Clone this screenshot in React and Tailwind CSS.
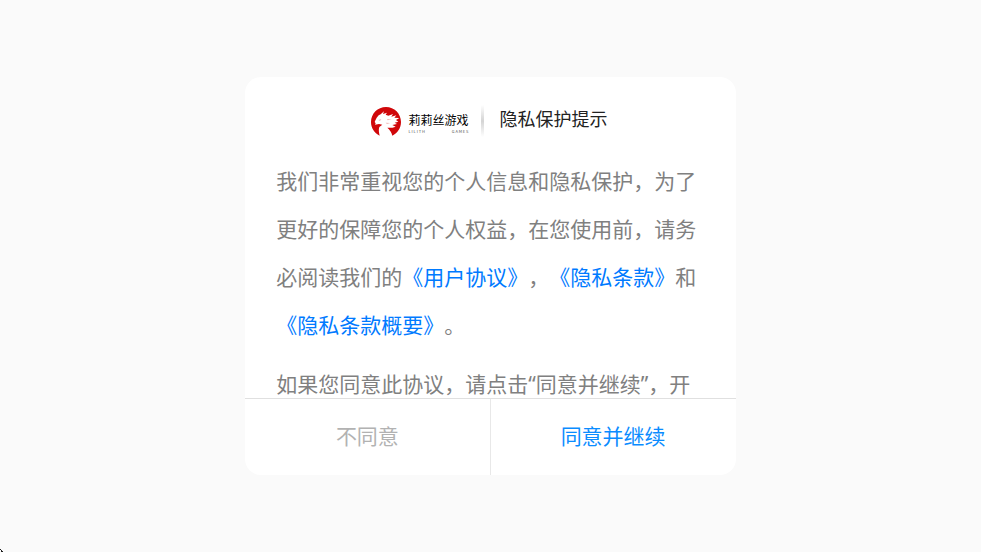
function LilithLogo() {
  return (
    <div className="flex items-center gap-[7px]">
      <svg className="h-[30px] w-[30px]" viewBox="0 0 90 90" aria-hidden="true">
        <path
          fill="#d0070a"
          d="M26 86C10 78 0 63 0 45C0 20 20 0 45 0S90 20 90 45C90 63 80 78 64 86C62 77 57 69 49 62Q60 64 74 59L64 54L78 51L71 47L82 44L75 39L85 33L70 32L76 25L61 29L66 21L52 26L44 23L48 17L36 21L39 13L29 22L23 25L17 32L14 38L11 45L14 49L12 53L24 51L34 53L25 60C22 68 24 77 26 86Z"
        />
        <path fill="#d0070a" opacity="0.3" d="M22 39L31 36L27 42ZM48 36L62 37L50 40ZM44 47L58 48L48 51Z" />
      </svg>
      <div className="flex flex-col font-['Noto_Sans_CJK_SC',sans-serif] text-black">
        <span className="text-[12px] leading-[18px]">莉莉丝游戏</span>
        <span className="flex justify-between text-[4px] leading-[4px] text-neutral-600">
          <span>L I L I T H</span>
          <span>G A M E S</span>
        </span>
      </div>
    </div>
  );
}

function PolicyLink({ children }) {
  return (
    <a href="#" className="text-[#007aff]">
      {children}
    </a>
  );
}

export default function App() {
  return (
    <main className="flex h-screen items-center justify-center overflow-hidden bg-[#fafafa] font-['Noto_Sans','Noto_Sans_CJK_SC',sans-serif] [text-spacing-trim:space-all]">
      <section
        role="dialog"
        aria-labelledby="privacy-title"
        className="flex h-[72vh] w-1/2 flex-col overflow-hidden rounded-2xl bg-white"
      >
        <header className="flex shrink-0 items-end justify-center pt-[26px] pr-[2px]">
          <LilithLogo />
          <span className="mr-4 ml-3 h-8 w-[3px] bg-linear-to-b from-white via-neutral-300 to-white" />
          <h1 id="privacy-title" className="pb-[2px] text-[18px] leading-8 text-[#222222]">
            隐私保护提示
          </h1>
        </header>

        <div className="min-h-0 flex-1 overflow-hidden px-[31px] pt-5 text-[21px] leading-[48px] text-[#808080]">
          <p>
            我们非常重视您的个人信息和隐私保护，为了更好的保障您的个人权益，在您使用前，请务必阅读我们的
            <PolicyLink>《用户协议》</PolicyLink>，<PolicyLink>《隐私条款》</PolicyLink>和
            <PolicyLink>《隐私条款概要》</PolicyLink>。
          </p>
          <p className="mt-[11px]">如果您同意此协议，请点击“同意并继续”，开</p>
        </div>

        <footer className="grid h-[77px] shrink-0 grid-cols-2 border-t border-[#e0e0e0] text-[21px]">
          <button type="button" className="border-r border-[#e8e8e8] text-[#b2b2b2]">
            不同意
          </button>
          <button type="button" className="text-[#0a8cff]">
            同意并继续
          </button>
        </footer>
      </section>

      <svg className="fixed bottom-0 left-0 h-[3px] w-[3px]" viewBox="0 0 3 3" aria-hidden="true">
        <path d="M0 0h1v1h-1zM1 1h1v1h1v1h-2z" fill="#222222" />
      </svg>
    </main>
  );
}
